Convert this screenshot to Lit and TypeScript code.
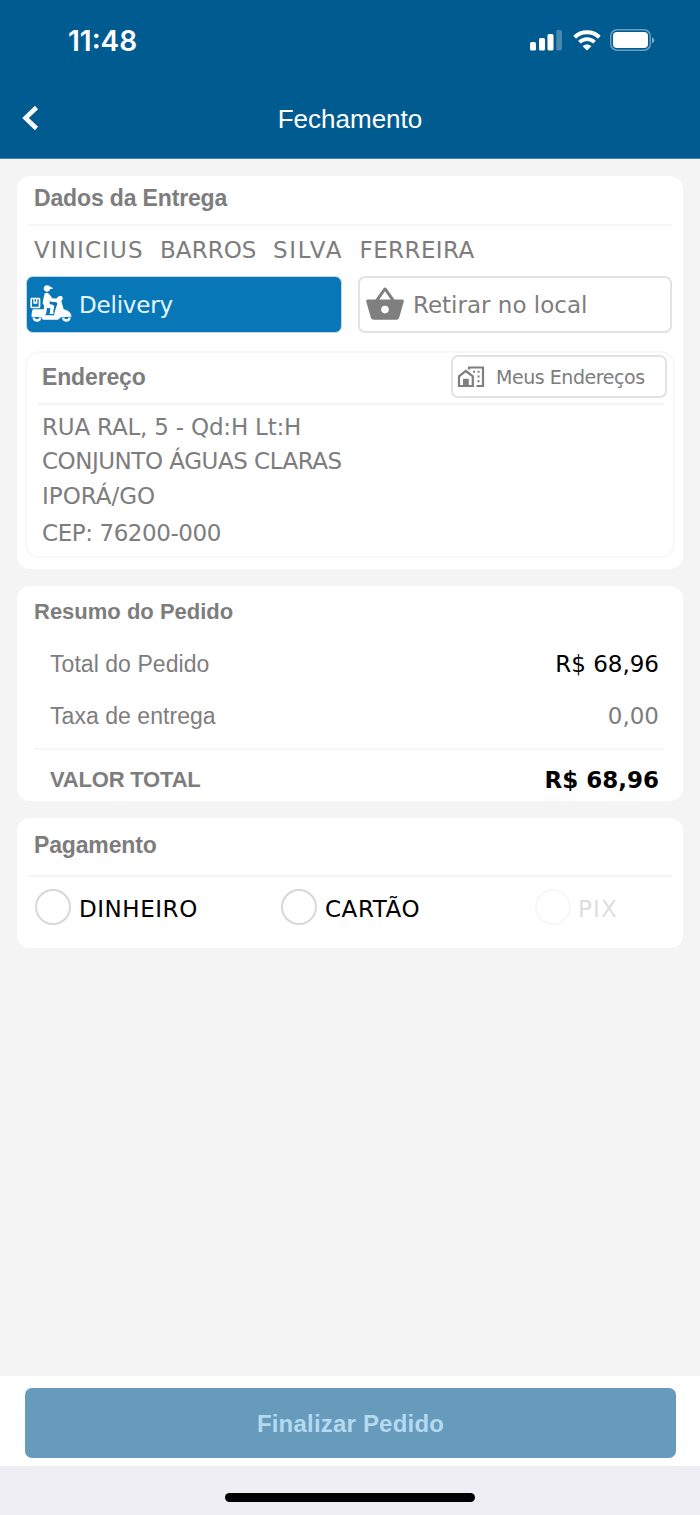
import { LitElement, html, css, svg } from "lit";
import { customElement } from "lit/decorators.js";
import { classMap } from "lit/directives/class-map.js";

const signalIcon = svg`
  <svg width="32" height="21" viewBox="0 0 32 21">
    <rect x="0" y="12" width="6" height="8.5" rx="1.6" fill="#fff"/>
    <rect x="9" y="8" width="6" height="12.5" rx="1.6" fill="#fff"/>
    <rect x="17.5" y="4" width="6" height="16.5" rx="1.6" fill="#fff"/>
    <rect x="26.3" y="0" width="5.7" height="20.5" rx="1.6" fill="#fff" opacity=".28"/>
  </svg>`;

const wifiIcon = svg`
  <svg width="28" height="21" viewBox="0 0 28 21">
    <path d="M1.700 7.200C8.500 .7 19.500 .7 26.300 7.200" fill="none" stroke="#fff" stroke-width="4"/>
    <path d="M6.400 12.200C10.700 8.100 17.300 8.100 21.600 12.200" fill="none" stroke="#fff" stroke-width="3.700"/>
    <path d="M14 20.500L9.600 16.200C12 13.800 16 13.800 18.400 16.200Z" fill="#fff"/>
  </svg>`;

const batteryIcon = svg`
  <svg width="46" height="23" viewBox="0 0 46 23">
    <rect x=".75" y=".75" width="39.500" height="20.500" rx="6.300" fill="none" stroke="#fff" stroke-opacity=".42" stroke-width="1.500"/>
    <rect x="3" y="3" width="35" height="16" rx="4" fill="#fff"/>
    <path d="M42 8.300Q44.200 9 44.200 11.300T42 14.300Z" fill="#fff" opacity=".5"/>
  </svg>`;

const backIcon = svg`
  <svg width="18" height="26" viewBox="0 0 18 26">
    <path d="M14.500 2.500L3.500 13L14.500 23.500" fill="none" stroke="#fff" stroke-width="4.500"/>
  </svg>`;

const scooterIcon = svg`
  <svg width="42" height="37" viewBox="0 0 126 111">
    <g fill="#fff">
      <path d="M41 10Q43 1 51 1Q59 1 62 6L68 8V12H60Q59 20 50 20Q41 19 41 10Z"/>
      <path d="M44 25Q53 20 58 28L67 40L83 41L86 47L82 52L62 50L59 47V57L70 60Q74 63 73 69L70 87H59L61 70L51 69L48 88H41L42 60Q36 57 39 47Z"/>
      <path fill-rule="evenodd" d="M4 38H27Q31 38 31 43V65Q31 70 26 70H6Q1 70 1 65V43Q1 38 4 38ZM6 43V65H26V43Z"/>
      <path d="M10 42H14V50H18V42H22V56H10Z"/>
      <path d="M9 73H42L46 80V91H72L76 74L82 56Q76 45 81 38Q87 30 96 34Q100 38 97 44L94 48L101 73Q122 77 125 95L93 97L84 104H39Q36 96 24 97H5Q4 79 9 73Z"/>
    </g>
    <path d="M55 73V87M75 62L71 80" fill="none" stroke="#0877b8" stroke-width="3"/>
    <g fill="#fff" stroke="#0877b8" stroke-width="1.500">
      <path d="M7 97A14 14 0 0 0 35 97Z"/>
      <path d="M95 97A14 14 0 0 0 123 97Z"/>
    </g>
    <path d="M16 99H26M104 99H114" stroke="#0877b8" stroke-width="6"/>
  </svg>`;

const basketIcon = svg`
  <svg width="38" height="34" viewBox="0 0 38 34">
    <path fill="#7f7f7f" fill-rule="evenodd" d="M1.500 12.500H9.500L17.400 1.400Q19 -.4 20.600 1.400L28.500 12.500H36.500Q38.300 13 37.700 14.700L33.200 30.500Q32.600 32.800 30.300 32.800H7.700Q5.400 32.800 4.800 30.500L.3 14.700Q-.2 13 1.500 12.500ZM13.300 12.500H24.700L19 4.300ZM19 18.800A3.800 3.800 0 1 0 19 26.400A3.800 3.800 0 1 0 19 18.800Z"/>
  </svg>`;

const homesIcon = svg`
  <svg width="28" height="22" viewBox="0 0 28 22">
    <g fill="none" stroke="#7f7f7f" stroke-width="2.200">
      <path d="M2 20V10.300L8.800 5L15.800 10.300V20Z"/>
      <path d="M12 3.500V1.500H26V20H19.500"/>
    </g>
    <path fill="#7f7f7f" d="M6 12.700H11.800V20.500H6ZM16 4.700H18V6.700H16ZM20.500 4.700H22.500V6.700H20.500ZM20.500 9.500H22.500V11.500H20.500ZM20.500 14.300H22.500V16.300H20.500Z"/>
  </svg>`;

const addressLines = [
  { text: "RUA RAL, 5 - Qd:H Lt:H", cls: "l1" },
  { text: "CONJUNTO ÁGUAS CLARAS", cls: "l2" },
  { text: "IPORÁ/GO", cls: "l3" },
  { text: "CEP: 76200-000", cls: "l4" },
];

const payments = [
  { label: "DINHEIRO", cls: "cash", off: false },
  { label: "CARTÃO", cls: "card-pay", off: false },
  { label: "PIX", cls: "pix", off: true },
];

@customElement("app-root")
export class AppRoot extends LitElement {
  static styles = css`
    :host {
      display: flex;
      flex-direction: column;
      height: 1515px;
      width: 700px;
      overflow: hidden;
      background: #f4f4f4;
      color: #7d7d7d;
      font: 23px/32px "DejaVu Sans", sans-serif;
    }
    * { box-sizing: border-box; }
    svg { display: block; flex: none; }
    header { height: 159px; background: #005b90; color: #fff; flex: none; border-bottom: 1px solid #4589b1; }
    .status { display: flex; height: 80px; padding: 0 44px 0 68px; align-items: center; }
    .time { font: 600 28px/40px Inter, sans-serif; flex: 1; padding-top: 1px; }
    .signal { margin-right: 11px; }
    .wifi { margin-right: 9px; }
    .nav { display: grid; grid-template-columns: 100px 1fr 100px; height: 78px; align-items: center; }
    .back { padding: 0 0 2px 22px; }
    .title { font: 26px/34px "Liberation Sans", Arial, sans-serif; text-align: center; }
    main { flex: 1; padding: 17px 17px 0; display: flex; flex-direction: column; gap: 17px; }
    .card { background: #fff; border-radius: 13px; }
    h2 { margin: 0; font: bold 23px/32px "Liberation Sans", Arial, sans-serif; letter-spacing: -0.15px; }
    .delivery { height: 393px; padding: 6px 8px 12px; }
    .delivery > h2 { padding-left: 9px; }
    .line { height: 2px; background: #f6f6f6; }
    .delivery > .line { margin: 10px 3px 0; }
    .name { padding: 8px 0 0 9px; letter-spacing: 0.9px; white-space: pre; }
    .n1 { letter-spacing: 1.1px; }
    .n2 { letter-spacing: 0.05px; }
    .n3 { letter-spacing: 1.7px; }
    .n4 { letter-spacing: 0.4px; }
    .modes { display: flex; justify-content: space-between; margin: 10px 3px 0 1px; height: 57px; }
    .mode { display: flex; align-items: center; border-radius: 7px; border: 2px solid #e2e2e2; height: 57px; width: 314px; }
    .mode.on { width: 316px; background: #0877b8; color: #e5f6ff; border: 1px solid #b9d9ea; padding-left: 4px; letter-spacing: -0.2px; }
    .mode.on svg { margin: 0 6px 2px -1px; }
    .mode.on span { padding-left: 1px; }
    .mode.pick { padding-left: 6px; }
    .mode.pick svg { margin: 0 9px 2px 0; }
    .address { margin-top: 18px; height: 207px; border: 2px solid #f7f7f7; border-radius: 14px; padding: 2px 6px 0 10px; }
    .address-head { display: flex; align-items: center; justify-content: space-between; height: 43px; padding-left: 5px; }
    .mine { display: flex; align-items: center; width: 216px; height: 43px; border: 2px solid #e2e2e2; border-radius: 7px; padding-left: 4px; gap: 11px; font-size: 19px; letter-spacing: -0.45px; }
    .address .line { margin: 5px 3px 0 0; }
    .row-text { padding-left: 5px; }
    .l1 { padding-top: 6px; letter-spacing: -0.2px; }
    .l2 { padding-top: 2px; letter-spacing: -0.48px; }
    .l3 { padding-top: 3px; }
    .l4 { padding-top: 5px; letter-spacing: -0.42px; }
    .summary { height: 215px; padding: 10px 18px 0 17px; }
    .summary h2 { font-size: 22px; letter-spacing: 0; }
    .item { display: flex; justify-content: space-between; padding: 0 6px 0 16px; }
    .label { font-family: "Liberation Sans", Arial, sans-serif; letter-spacing: 0.05px; }
    .first { margin-top: 20px; }
    .second { margin-top: 20px; }
    .summary .line { margin-top: 16px; }
    .total { margin-top: 14px; font-weight: bold; }
    .total .label { font-size: 22px; letter-spacing: -0.2px; }
    .black { color: #000; }
    .pay { height: 130px; padding: 11px 11px 0; }
    .pay > h2 { padding-left: 6px; }
    .pay .line { margin-top: 14px; }
    .options { display: flex; padding: 12px 0 0 7px; color: #000; }
    .option { display: flex; align-items: center; gap: 8px; height: 36px; letter-spacing: 0.55px; }
    .option.cash { width: 246px; }
    .option.card-pay { width: 254px; }
    .dot { width: 36px; height: 36px; border-radius: 50%; border: 2px solid #d8d8d8; flex: none; }
    .text { padding-top: 3px; }
    .option.off { color: #dedede; letter-spacing: 1.2px; gap: 7px; }
    .off .dot { border-color: #f7f7f7; }
    footer { flex: none; height: 90px; background: #fff; padding: 12px 24px 8px 25px; }
    .finish { width: 651px; height: 70px; border: 0; border-radius: 7px; background: #669bbc; color: #b5d9ef; font: bold 24px/32px "Liberation Sans", Arial, sans-serif; letter-spacing: 0.2px; padding: 2px 0 0; display: block; }
    .safe { flex: none; height: 49px; background: #efeef4; display: flex; justify-content: center; padding-top: 27px; }
    .bar { width: 250px; height: 9px; border-radius: 5px; background: #000; }
  `;

  render() {
    return html`
      <header>
        <div class="status">
          <span class="time">11:48</span>
          <span class="signal">${signalIcon}</span>
          <span class="wifi">${wifiIcon}</span>
          <span>${batteryIcon}</span>
        </div>
        <div class="nav">
          <span class="back">${backIcon}</span>
          <span class="title">Fechamento</span>
        </div>
      </header>
      <main>
        <section class="card delivery">
          <h2>Dados da Entrega</h2>
          <div class="line"></div>
          <div class="name"><span class="n1">VINICIUS</span>  <span class="n2">BARROS</span>  <span class="n3">SILVA</span>  <span class="n4">FERREIRA</span></div>
          <div class="modes">
            <div class="mode on">${scooterIcon}<span>Delivery</span></div>
            <div class="mode pick">${basketIcon}<span>Retirar no local</span></div>
          </div>
          <div class="address">
            <div class="address-head">
              <h2>Endereço</h2>
              <div class="mine">${homesIcon}<span>Meus Endereços</span></div>
            </div>
            <div class="line"></div>
            ${addressLines.map((l) => html`<div class=${classMap({ "row-text": true, [l.cls]: true })}>${l.text}</div>`)}
          </div>
        </section>
        <section class="card summary">
          <h2>Resumo do Pedido</h2>
          <div class="item first"><span class="label">Total do Pedido</span><span class="black">R$ 68,96</span></div>
          <div class="item second"><span class="label">Taxa de entrega</span><span>0,00</span></div>
          <div class="line"></div>
          <div class="item total"><span class="label">VALOR TOTAL</span><span class="black">R$ 68,96</span></div>
        </section>
        <section class="card pay">
          <h2>Pagamento</h2>
          <div class="line"></div>
          <div class="options">
            ${payments.map((p) => html`<div class=${classMap({ option: true, off: p.off, [p.cls]: true })}>
              <span class="dot"></span><span class="text">${p.label}</span>
            </div>`)}
          </div>
        </section>
      </main>
      <footer><button class="finish">Finalizar Pedido</button></footer>
      <div class="safe"><div class="bar"></div></div>`;
  }
}
